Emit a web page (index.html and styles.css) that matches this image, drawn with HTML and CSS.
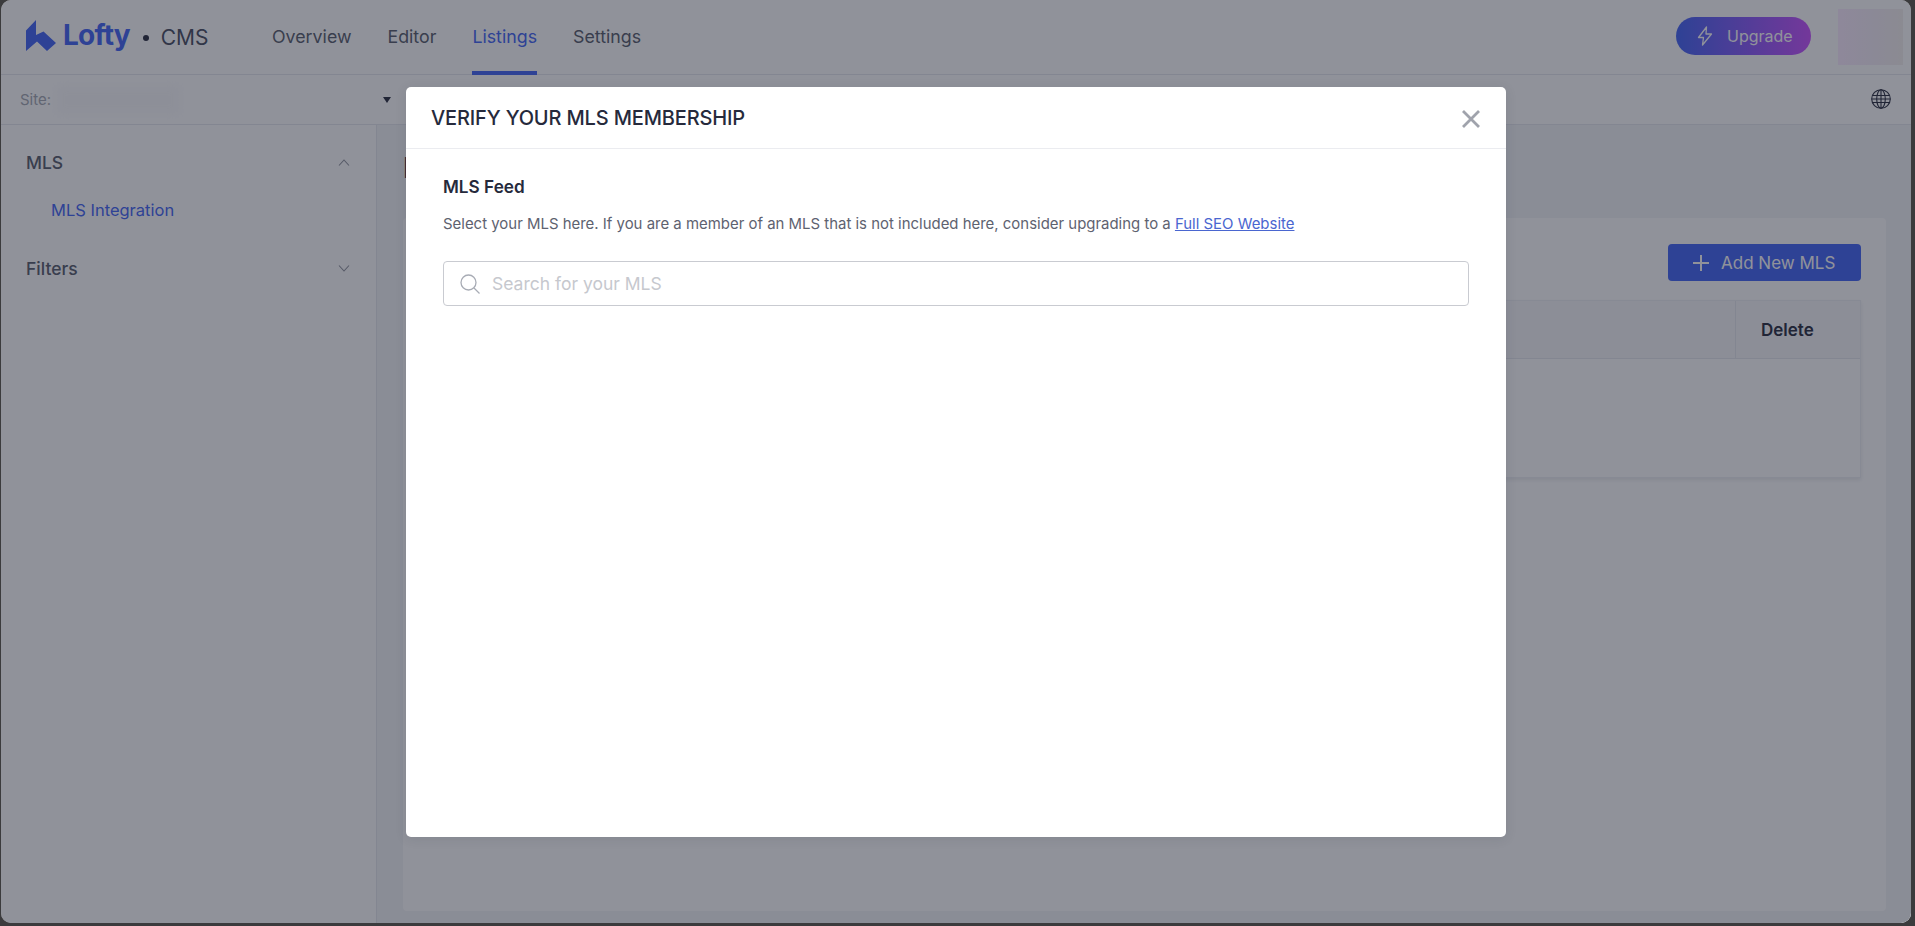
FILE: index.html
```html
<!DOCTYPE html>
<html lang="en">
<head>
<meta charset="utf-8">
<title>Lofty CMS</title>
<link rel="stylesheet" href="styles.css">
</head>
<body>
<div class="window">
  <header class="topbar">
    <div class="brand">
      <svg class="logo" viewBox="0 0 30 32" width="30" height="32"><path d="M0 10.500 10 0v15l7.500-3.500L30 23l-9 8-10-9.500L0 31z" fill="#3a5ef4"/></svg>
      <span class="brand-name">Lofty</span>
      <span class="brand-dot"></span>
      <span class="brand-cms">CMS</span>
    </div>
    <nav class="nav">
      <a class="nav-item">Overview</a>
      <a class="nav-item">Editor</a>
      <a class="nav-item active">Listings</a>
      <a class="nav-item">Settings</a>
    </nav>
    <div class="top-right">
      <button class="upgrade">
        <svg viewBox="0 0 16 20" width="16" height="20" fill="none" stroke="currentColor" stroke-width="1.300" stroke-linejoin="round"><path d="M9.500 1 1.500 11.500h5L5.500 19l9-11h-5.500z"/></svg>
        <span>Upgrade</span>
      </button>
      <div class="avatar"></div>
    </div>
  </header>
  <div class="subbar">
    <span class="site-label">Site:</span>
    <span class="site-value"></span>
    <span class="caret"></span>
    <svg class="globe" viewBox="0 0 20 20" width="20" height="20" fill="none" stroke="#202437" stroke-width="1.100"><circle cx="10" cy="10" r="9.300"/><ellipse cx="10" cy="10" rx="4.300" ry="9.300"/><path d="M10 .7v18.600M1.500 6.500h17M1.500 13.500h17M.7 10h18.600"/></svg>
  </div>
  <div class="main">
    <aside class="sidebar">
      <div class="side-head"><span>MLS</span><svg viewBox="0 0 12 7" width="12" height="7" fill="none" stroke="#8a8e99" stroke-width="1.100"><path d="M1 6.500 6 1l5 5.500"/></svg></div>
      <a class="side-link">MLS Integration</a>
      <div class="side-head second"><span>Filters</span><svg viewBox="0 0 12 7" width="12" height="7" fill="none" stroke="#8a8e99" stroke-width="1.100"><path d="M1 .5 6 6l5-5.500"/></svg></div>
    </aside>
    <section class="content">
      <h1 class="page-title">MLS Integration</h1>
      <div class="card">
        <div class="card-actions">
          <button class="add-btn">
            <svg viewBox="0 0 16 16" width="16" height="16" stroke="currentColor" stroke-width="2"><path d="M8 0v16M0 8h16"/></svg>
            <span>Add New MLS</span>
          </button>
        </div>
        <div class="table">
          <div class="table-head">
            <div class="cell grow">MLS</div>
            <div class="cell del">Delete</div>
          </div>
          <div class="table-body"></div>
        </div>
      </div>
    </section>
  </div>
  <div class="scrim">
    <div class="modal">
      <div class="modal-head">
        <h2 class="modal-title">VERIFY YOUR MLS MEMBERSHIP</h2>
        <svg class="close" viewBox="0 0 18 18" width="18" height="18" stroke="#a0a3ac" stroke-width="2.800"><path d="M1 1l16 16M17 1 1 17"/></svg>
      </div>
      <div class="modal-body">
        <h3 class="feed-title">MLS Feed</h3>
        <p class="feed-text">Select your MLS here. If you are a member of an MLS that is not included here, consider upgrading to a <a class="feed-link">Full SEO Website</a></p>
        <label class="search">
          <svg viewBox="0 0 20 20" width="20" height="20" fill="none" stroke="#a8acb5" stroke-width="1.300"><circle cx="8.500" cy="8.500" r="7.500"/><path d="m14 14 5.500 5.500"/></svg>
          <input class="search-input" type="text" placeholder="Search for your MLS">
        </label>
      </div>
    </div>
  </div>
</div>
</body>
</html>
```

FILE: styles.css
```css
* { box-sizing: border-box; }
html, body { height: 100%; margin: 0; }
body {
  background: #3b3b3d;
  padding: 0 4px 3px 1px;
  font-family: Inter, "Liberation Sans", sans-serif;
  color: #202437;
  overflow: hidden;
}
.window {
  position: relative;
  height: 100%;
  display: flex;
  flex-direction: column;
  background: #fff;
  border-radius: 10px;
  overflow: hidden;
}
.topbar {
  height: 75px;
  flex: none;
  display: flex;
  align-items: center;
  padding: 0 8px 0 25px;
  border-bottom: 1px solid #e5e7ed;
}
.brand { display: flex; align-items: center; width: 246px; }
.logo { margin-top: -3px; }
.brand-name {
  margin: -4px 0 0 7px;
  font-size: 28px;
  font-weight: 700;
  letter-spacing: -0.8px;
  color: #3a5ef4;
}
.brand-dot {
  width: 6px;
  height: 6px;
  margin: 2px 0 0 13px;
  border-radius: 50%;
  background: #202437;
}
.brand-cms { margin-left: 12px; font-size: 21px; color: #41465a; }
.nav { display: flex; gap: 36px; height: 100%; }
.nav-item {
  display: flex;
  align-items: center;
  padding-top: 1px;
  font-size: 17.800px;
  color: #515666;
  border-bottom: 4px solid transparent;
  margin-bottom: -1px;
}
.nav-item.active { color: #3a5ef4; border-bottom-color: #3a5ef4; }
.top-right { margin-left: auto; display: flex; align-items: center; gap: 27px; }
.upgrade {
  width: 135px;
  height: 38px;
  margin-top: -3px;
  display: flex;
  align-items: center;
  gap: 14px;
  padding: 0 0 0 21px;
  border: 0;
  border-radius: 19px;
  background: linear-gradient(90deg, #3a5ef4, #c64aff);
  color: #fff;
  font: 400 16px Inter, sans-serif;
}
.avatar {
  width: 65px;
  height: 56px;
  margin-top: -1px;
  background: linear-gradient(90deg, #fbebff, #f5ecf8 50%, #f4f0ee);
}
.subbar {
  height: 50px;
  flex: none;
  display: flex;
  align-items: center;
  padding: 0 20px 0 19px;
  border-bottom: 1px solid #e5e7ed;
}
.site-label { font-size: 15px; color: #a0a4ae; width: 35px; }
.site-value { width: 126px; height: 30px; background: #f9f9fb; filter: blur(6px); }
.caret {
  margin-left: 202px;
  border: 4.500px solid transparent;
  border-top: 6px solid #202437;
  border-bottom: 0;
}
.globe { margin-left: auto; margin-top: -2px; }
.main { flex: 1; min-height: 0; display: flex; }
.sidebar {
  width: 376px;
  flex: none;
  padding: 23px 25px 0 25px;
  border-right: 1px solid #e5e7ed;
}
.side-head {
  display: flex;
  justify-content: space-between;
  align-items: center;
  height: 28px;
  padding-right: 1px;
  font-size: 17.500px;
  font-weight: 500;
  color: #515666;
}
.side-head.second { margin-top: 30px; }
.side-link {
  display: block;
  margin: 20px 0 0 25px;
  line-height: 28px;
  font-size: 16.500px;
  color: #3a5ef4;
}
.content {
  flex: 1;
  min-width: 0;
  display: flex;
  flex-direction: column;
  padding: 26px 25px 12px 26px;
  background: #f2f4f6;
}
.page-title {
  margin: 0 0 32px;
  height: 35px;
  line-height: 35px;
  font-size: 28px;
  font-weight: 600;
}
.card {
  flex: 1;
  padding: 26px 25px 0;
  background: #fff;
  border-radius: 4px;
}
.card-actions { display: flex; justify-content: flex-end; }
.add-btn {
  width: 193px;
  height: 37px;
  display: flex;
  align-items: center;
  gap: 12px;
  padding: 0 0 0 25px;
  border: 0;
  border-radius: 4px;
  background: #3a5ef4;
  color: #fff;
  font: 400 17px Inter, sans-serif;
}
.table {
  height: 178px;
  margin-top: 19px;
  border: 1px solid #eceef2;
  box-shadow: 0 2px 4px rgba(32, 36, 55, .1);
}
.table-head { height: 58px; display: flex; border-bottom: 1px solid #e5e7ed; background: #f6f7f9; }
.cell { display: flex; align-items: center; font-size: 17px; font-weight: 600; }
.grow { flex: 1; padding-left: 25px; }
.del { width: 125px; padding-left: 25px; border-left: 1px solid #e5e7ed; }
.scrim {
  position: absolute;
  inset: 0;
  display: flex;
  justify-content: center;
  align-items: flex-start;
  padding-top: 87px;
  background: rgba(34, 38, 54, .5);
}
.modal {
  width: 1100px;
  height: 750px;
  background: #fff;
  border-radius: 5px;
  box-shadow: 0 2px 12px rgba(32, 36, 55, .1);
}
.modal-head {
  height: 62px;
  display: flex;
  align-items: center;
  justify-content: space-between;
  padding: 0 26px 0 25px;
  border-bottom: 1px solid #ebecf0;
}
.modal-title { margin: 0; font-size: 20px; letter-spacing: -.15px; font-weight: 500; color: #262a3c; }
.close { margin-top: 2px; }
.modal-body { padding: 26px 37px 0; }
.feed-title { margin: 0; font-size: 17.200px; line-height: 24px; font-weight: 600; color: #262a3c; }
.feed-text { margin: 13px 0 0; font-size: 14.950px; line-height: 24px; color: #5e6270; }
.feed-link { color: #4a66d0; text-decoration: underline; }
.search {
  height: 45px;
  margin-top: 25px;
  display: flex;
  align-items: center;
  gap: 12px;
  padding: 0 16px;
  border: 1px solid #c9cbd1;
  border-radius: 4px;
}
.search-input {
  flex: 1;
  border: 0;
  outline: 0;
  padding: 0;
  font: 400 17.500px Inter, sans-serif;
  color: #202437;
}
.search-input::placeholder { color: #c6c8ce; opacity: 1; }
```
